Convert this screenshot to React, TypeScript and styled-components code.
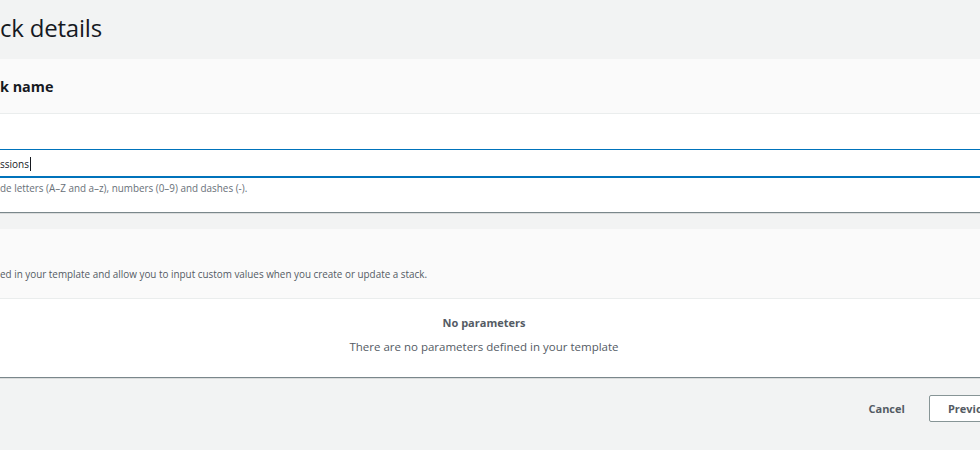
import React from "react";
import styled, { createGlobalStyle } from "styled-components";

const Global = createGlobalStyle`
  html, body { margin: 0; padding: 0; background: #f2f3f3; }
  body { font-family: "Open Sans", "Noto Sans", sans-serif; color: #16191f; overflow: hidden; }
  #root { width: 980px; height: 450px; overflow: hidden; }
`;

const Page = styled.div`
  width: 1048px;
  margin-left: -40px;
  display: flex;
  flex-direction: column;
`;

const Title = styled.h1`
  margin: 0;
  height: 59px;
  box-sizing: border-box;
  padding: 0 0 5px 40px;
  display: flex;
  align-items: center;
  font-size: 24px;
  font-weight: 400;
  color: #16191f;
  letter-spacing: -0.2px;
`;

const Card = styled.section<{ $gap?: number }>`
  background: #fff;
  margin-bottom: ${(p) => p.$gap ?? 0}px;
  box-shadow: 0 1px 1px 0 rgba(0, 28, 36, 0.3), 1px 1px 1px 0 rgba(0, 28, 36, 0.15), -1px 1px 1px 0 rgba(0, 28, 36, 0.15);
`;

const CardHeader = styled.header<{ $h: number; $end?: boolean }>`
  height: ${(p) => p.$h}px;
  box-sizing: border-box;
  background: #fafafa;
  border-bottom: 1px solid #eaeded;
  padding: ${(p) => (p.$end ? "0 0 17px 40px" : "0 0 0 40px")};
  display: flex;
  flex-direction: column;
  justify-content: ${(p) => (p.$end ? "flex-end" : "center")};
`;

const CardTitle = styled.h2`
  margin: 0;
  font-size: 14.4px;
  font-weight: 700;
  color: #16191f;
`;

const HeaderDesc = styled.p`
  margin: 0;
  font-size: 9.9px;
  line-height: 14px;
  color: #545b64;
`;

const Body = styled.div`
  padding: 35px 20px 17px 40px;
`;

const InputBox = styled.div`
  height: 29px;
  margin-right: -40px;
  box-sizing: border-box;
  padding-top: 2px;
  border-top: 1px solid #0073bb;
  border-bottom: 2px solid #0073bb;
  background: #fff;
  display: flex;
  align-items: center;
  font-size: 10px;
  color: #16191f;
`;

const Caret = styled.span`
  display: inline-block;
  width: 1px;
  height: 14px;
  background: #16191f;
  margin-left: 1px;
`;

const Hint = styled.p`
  margin: 3px 0 0;
  font-size: 9.9px;
  color: #687078;
`;

const Empty = styled.div`
  height: 78px;
  box-sizing: border-box;
  padding-top: 16px;
  display: flex;
  flex-direction: column;
  align-items: center;
  gap: 9px;
  color: #545b64;
`;

const EmptyTitle = styled.strong`
  font-size: 11px;
  line-height: 15px;
  font-weight: 700;
`;

const EmptyText = styled.span`
  font-size: 11.5px;
  line-height: 16px;
`;

const Footer = styled.div`
  display: flex;
  justify-content: flex-end;
  align-items: center;
  gap: 24px;
  margin-right: -95px;
  padding-top: 18px;
`;

const LinkButton = styled.button`
  border: none;
  background: none;
  padding: 0;
  font-family: inherit;
  font-size: 11px;
  font-weight: 700;
  color: #545b64;
`;

const Button = styled.button<{ $primary?: boolean }>`
  height: 27px;
  padding: 0 18px;
  border: 1px solid ${(p) => (p.$primary ? "#ec7211" : "#879596")};
  border-radius: 2px;
  background: ${(p) => (p.$primary ? "#ec7211" : "#fff")};
  font-family: inherit;
  font-size: 11px;
  font-weight: 700;
  color: ${(p) => (p.$primary ? "#fff" : "#545b64")};
`;

export default function App() {
  return (
    <>
      <Global />
      <Page>
        <Title>ck details</Title>
        <Card $gap={17}>
          <CardHeader $h={55}>
            <CardTitle>k name</CardTitle>
          </CardHeader>
          <Body>
            <InputBox>
              ssions
              <Caret />
            </InputBox>
            <Hint>de letters (A–Z and a–z), numbers (0–9) and dashes (-).</Hint>
          </Body>
        </Card>
        <Card>
          <CardHeader $h={70} $end>
            <HeaderDesc>ed in your template and allow you to input custom values when you create or update a stack.</HeaderDesc>
          </CardHeader>
          <Empty>
            <EmptyTitle>No parameters</EmptyTitle>
            <EmptyText>There are no parameters defined in your template</EmptyText>
          </Empty>
        </Card>
        <Footer>
          <LinkButton>Cancel</LinkButton>
          <Button>Previous</Button>
          <Button $primary>Next</Button>
        </Footer>
      </Page>
    </>
  );
}
